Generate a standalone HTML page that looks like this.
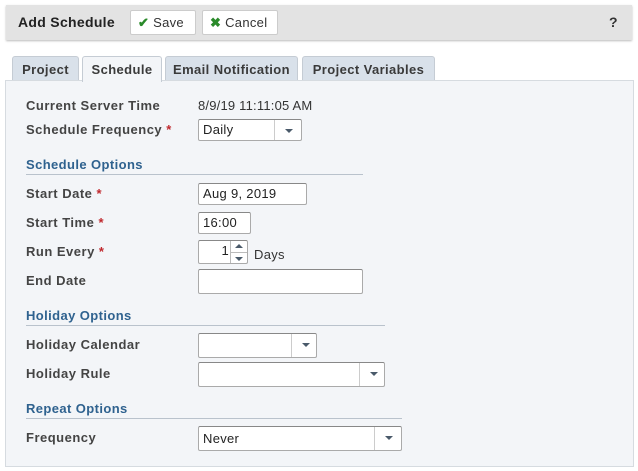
<!DOCTYPE html><html><head><style>
body{margin:0;width:638px;height:471px;background:#fff;font-family:"Liberation Sans",sans-serif;font-size:13px;color:#333;position:relative;overflow:hidden}
.a{position:absolute}
.hdr{left:6px;top:5px;width:626px;height:35px;background:#e3e3e3;box-shadow:0 1px 2px #bbb}
.btn{top:10px;height:23px;background:#fff;border:1px solid #ccc;border-radius:2px;font-size:13px;line-height:23px;color:#333;letter-spacing:0.3px}
.tab{top:56px;height:24px;background:#d9e1ea;border:1px solid #c5ccd4;border-bottom:none;border-radius:3px 3px 0 0;font-weight:bold;color:#3a3a3a;line-height:26px;text-align:center;font-size:13px;letter-spacing:0.4px}
.panel{left:5px;top:80px;width:627px;height:385px;background:#f3f5f8;border:1px solid #d6dbe0}
.lb{left:26px;font-weight:bold;color:#444;font-size:13px;letter-spacing:0.5px}
.st{color:#c0282d}
.sec{left:26px;font-weight:bold;color:#2f628f;font-size:13px;border-bottom:1px solid #b9c2cc;padding-bottom:2px;letter-spacing:0.4px}
.in{background:#fff;border:1px solid #aaa;border-top-color:#888;border-radius:2px;height:22px;box-sizing:border-box;line-height:20px;padding-left:4px;font-size:13px;color:#222;letter-spacing:0.3px}
.dd{position:absolute;right:0;top:0;bottom:0;width:26px;border-left:1px solid #ccc}
.dd:after{content:"";position:absolute;left:10px;top:9px;border:4px solid transparent;border-top:4px solid #4a5a6a;border-bottom:none}
</style></head><body>
<div class="a hdr"></div>
<div class="a" style="left:18px;top:14px;font-weight:bold;font-size:14px;color:#222;letter-spacing:0.3px">Add Schedule</div>
<div class="a btn" style="left:130px;width:64px"><span style="color:#2a8a2a;font-weight:bold;margin-left:7px">✔</span> Save</div>
<div class="a btn" style="left:202px;width:74px"><span style="color:#2a8a2a;font-weight:bold;margin-left:7px">✖</span> Cancel</div>
<div class="a" style="left:609px;top:14px;font-weight:bold;font-size:14px">?</div>
<div class="a tab" style="left:12px;width:65px">Project</div>
<div class="a tab" style="left:82px;width:78px;background:#f3f5f8;height:25px;z-index:2">Schedule</div>
<div class="a tab" style="left:165px;width:131px">Email Notification</div>
<div class="a tab" style="left:302px;width:131px">Project Variables</div>
<div class="a panel"></div>
<div class="a lb" style="top:98px">Current Server Time</div>
<div class="a" style="left:198px;top:98px;color:#333;letter-spacing:0.2px">8/9/19 11:11:05 AM</div>
<div class="a lb" style="top:122px">Schedule Frequency <span class="st">*</span></div>
<div class="a in" style="left:198px;top:119px;width:104px">Daily<div class="dd"></div></div>
<div class="a sec" style="top:157px;width:337px">Schedule Options</div>
<div class="a lb" style="top:186px">Start Date <span class="st">*</span></div>
<div class="a in" style="left:198px;top:183px;width:109px">Aug 9, 2019</div>
<div class="a lb" style="top:215px">Start Time <span class="st">*</span></div>
<div class="a in" style="left:198px;top:212px;width:53px">16:00</div>
<div class="a lb" style="top:244px">Run Every <span class="st">*</span></div>
<div class="a in" style="left:198px;top:240px;width:50px;height:24px;text-align:right;padding-right:18px">1
<div style="position:absolute;right:0;top:0;width:16px;height:22px;border-left:1px solid #bbb"><div style="height:11px;border-bottom:1px solid #bbb;position:relative"><div style="position:absolute;left:4px;top:3px;border:4px solid transparent;border-bottom:4px solid #4a5a6a;border-top:none"></div></div><div style="position:relative"><div style="position:absolute;left:4px;top:4px;border:4px solid transparent;border-top:4px solid #4a5a6a;border-bottom:none"></div></div></div></div>
<div class="a" style="left:254px;top:247px;letter-spacing:0.3px">Days</div>
<div class="a lb" style="top:273px">End Date</div>
<div class="a in" style="left:198px;top:269px;width:165px;height:25px"></div>
<div class="a sec" style="top:308px;width:359px">Holiday Options</div>
<div class="a lb" style="top:337px">Holiday Calendar</div>
<div class="a in" style="left:198px;top:333px;width:119px;height:25px"><div class="dd" style="width:24px"></div></div>
<div class="a lb" style="top:366px">Holiday Rule</div>
<div class="a in" style="left:198px;top:362px;width:187px;height:25px"><div class="dd" style="width:24px"></div></div>
<div class="a sec" style="top:401px;width:376px">Repeat Options</div>
<div class="a lb" style="top:430px">Frequency</div>
<div class="a in" style="left:198px;top:426px;width:204px;height:25px;line-height:23px">Never<div class="dd"></div></div>
</body></html>
